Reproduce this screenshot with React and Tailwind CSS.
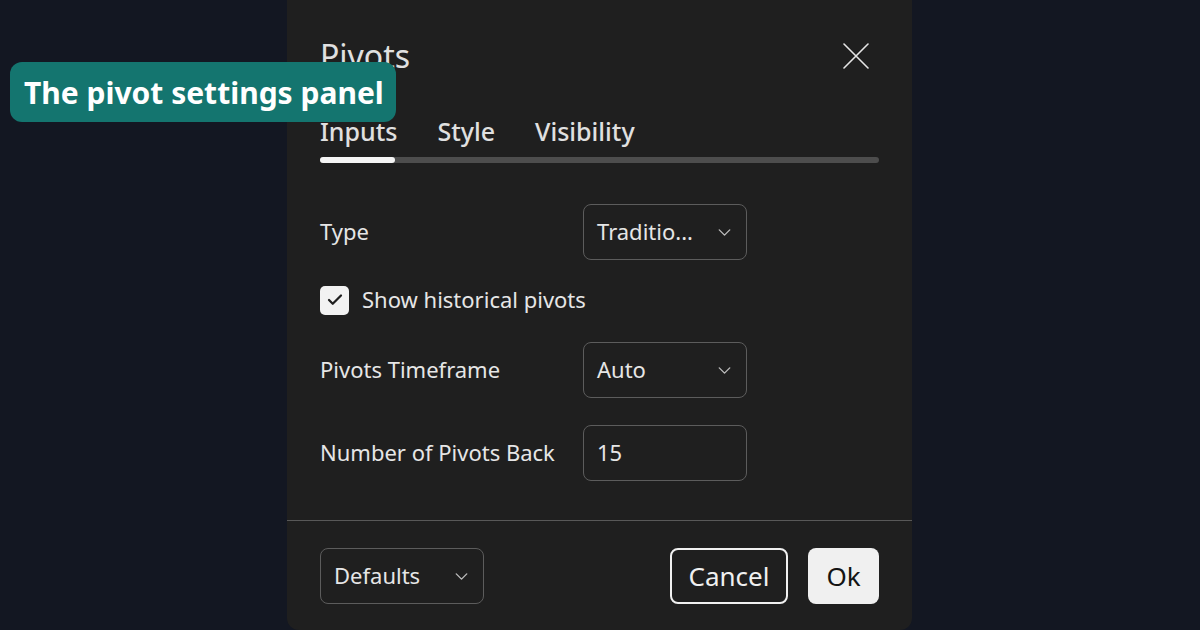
import { ChevronDown, Check } from "lucide-react";

const FONT = { fontFamily: '"Noto Sans", "Open Sans", sans-serif' };

function Select({ value }) {
  return (
    <div className="w-[164px] h-[56px] rounded-lg border border-[#5c5c5c] flex items-center justify-between pl-[13px] pr-[11px] text-[22px] text-[#e6e6e6]">
      <span className="-mt-[2px]">{value}</span>
      <ChevronDown size={21} strokeWidth={1.6} className="text-[#bdbdbd]" />
    </div>
  );
}

function Row({ label, children }) {
  return (
    <div className="flex items-center">
      <span className="w-[263px] -mt-[2px] text-[22px] text-[#e6e6e6]">{label}</span>
      {children}
    </div>
  );
}

export default function App() {
  return (
    <div className="relative w-[1200px] h-[630px] overflow-hidden bg-[#131722] flex justify-center" style={FONT}>
      {/* dialog */}
      <div className="w-[625px] -ml-[1px] h-[630px] bg-[#1f1f1f] rounded-b-xl flex flex-col">
        <div className="px-[33px] pt-[36px] flex flex-col">
          <div className="h-[40px] flex items-center justify-between">
            <span className="text-[32px] text-[#e0e0e0]">Pivots</span>
            <svg width="26" height="26" viewBox="0 0 26 26" className="mr-[10px]" fill="none" stroke="#e6e6e6" strokeWidth="1.6" strokeLinecap="round">
              <path d="M1 1L25 25M25 1L1 25" />
            </svg>
          </div>

          <div className="mt-[36px] h-[40px] flex items-center gap-[40px] text-[25px] font-medium text-[#e0e0e0]">
            <span>Inputs</span>
            <span>Style</span>
            <span>Visibility</span>
          </div>
          <div className="mt-[5px] h-[6px] rounded-full bg-[#4d4d4d] flex">
            <div className="w-[75px] h-[6px] rounded-full bg-[#f5f5f5]" />
          </div>

          <div className="mt-[41px]">
            <Row label="Type">
              <Select value="Traditio..." />
            </Row>
          </div>

          <div className="mt-[25px] flex items-center gap-[13px] h-[30px]">
            <div className="w-[29px] h-[29px] rounded-[5px] bg-[#f2f2f2] flex items-center justify-center">
              <Check size={18} strokeWidth={3} className="text-[#1f1f1f]" />
            </div>
            <span className="-mt-[2px] text-[22px] text-[#e6e6e6]">Show historical pivots</span>
          </div>

          <div className="mt-[27px]">
            <Row label="Pivots Timeframe">
              <Select value="Auto" />
            </Row>
          </div>

          <div className="mt-[27px]">
            <Row label="Number of Pivots Back">
              <div className="w-[164px] h-[56px] rounded-lg border border-[#5c5c5c] flex items-center pl-[13px] text-[22px] text-[#e6e6e6]">
                <span className="-mt-[2px]">15</span>
              </div>
            </Row>
          </div>
        </div>

        <div className="mt-[39px] border-t border-[#585858]" />

        <div className="px-[33px] mt-[27px] flex items-center justify-between">
          <Select value="Defaults" />
          <div className="flex items-center gap-[20px]">
            <button className="w-[118px] h-[56px] rounded-lg border-2 border-[#f0f0f0] text-[26px] text-[#f0f0f0]">
              Cancel
            </button>
            <button className="w-[71px] h-[56px] rounded-lg bg-[#f0f0f0] text-[26px] text-[#141414]">
              Ok
            </button>
          </div>
        </div>
      </div>

      {/* caption badge */}
      <div className="absolute left-[10px] top-[62px] h-[60px] w-[386px] rounded-xl bg-[#14756f] flex items-center pl-[14px] text-[30px] font-bold text-white">
        The pivot settings panel
      </div>
    </div>
  );
}
